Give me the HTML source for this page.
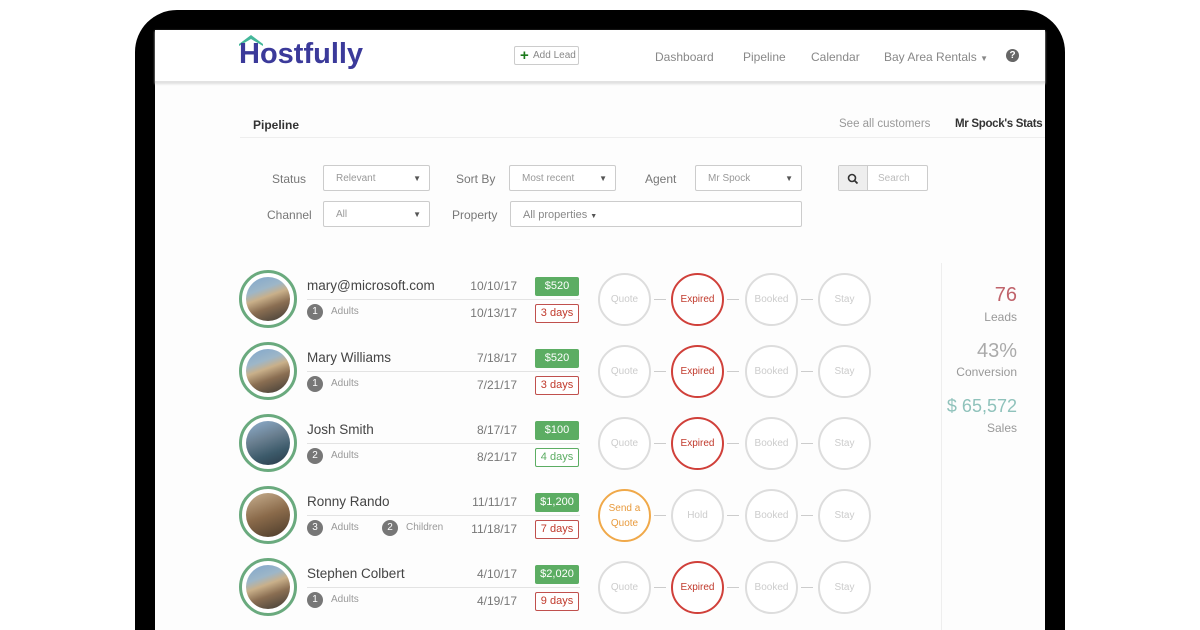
<!DOCTYPE html><html><head><style>
*{margin:0;padding:0;box-sizing:border-box}
html,body{width:1200px;height:630px;overflow:hidden}
body{background:#fff;position:relative;font-family:"Liberation Sans",sans-serif;color:#555}
.a{position:absolute;white-space:nowrap}
.frame{left:135px;top:10px;width:930px;height:640px;background:#000;border-radius:42px 42px 0 0}
.screen{left:155px;top:30px;width:890px;height:600px;background:#fdfdfd}
.hdr{left:155px;top:30px;width:890px;height:53px;background:#fff;border-bottom:2px solid #e2e2e2;box-shadow:0 1px 2px #ddd}
.nav{font-size:12px;color:#888;top:50px}
.lbl{font-size:12px;color:#777}
.sel{height:26px;border:1px solid #ccc;border-radius:2px;font-size:10px;color:#999;padding:7px 12px;background:#fff}
.sel b{position:absolute;right:8px;top:8px;font-size:8px;color:#555;font-weight:normal}
.av{width:58px;height:58px;border-radius:50%;border:3px solid #6aaa7e;background:#fff}
.av i{position:absolute;left:4px;top:4px;width:44px;height:44px;border-radius:50%;background:linear-gradient(160deg,#7fa6cc 0%,#9db6c8 30%,#c9b08a 45%,#8a6e52 65%,#3d3a35 100%)}
.nm{font-size:13.5px;color:#444}
.ln{height:1px;background:#e3e3e3;width:273px}
.num{width:16px;height:16px;border-radius:50%;background:#777;color:#fff;font-size:10px;text-align:center;line-height:16px}
.ad{font-size:10px;color:#999}
.dt{font-size:12px;color:#777;width:80px;text-align:right}
.pr{width:44px;height:19px;background:#5cad63;color:#fff;font-size:11px;text-align:center;line-height:19px;border-radius:2px}
.dy{width:44px;height:19px;border:1px solid #c0504d;color:#c0392b;font-size:11px;text-align:center;line-height:17px;border-radius:2px;background:#fff}
.dy.g{border-color:#5cad63;color:#5cad63}
.c{width:53px;height:53px;border-radius:50%;border:2px solid #ddd;font-size:10px;color:#ccc;text-align:center;display:flex;align-items:center;justify-content:center;background:#fff;line-height:15px;white-space:normal}
.c.r{border-color:#d0403a;color:#c0392b}
.c.o{border-color:#f0a94a;color:#e89a3c}
.cn{width:12px;height:1px;background:#ccc}
</style></head><body>
<div class="a frame"></div>
<div class="a screen"></div>
<div class="a hdr"></div>
<svg class="a" style="left:238px;top:33px" width="26" height="13"><path d="M1 11 L13 2 L25 11 L25 13 L13 6 L1 13Z" fill="#45b79a"/></svg>
<div class="a" style="left:239px;top:38px;font-size:29px;font-weight:bold;color:#3b3a9a;letter-spacing:0px">Hostfully</div>
<div class="a" style="left:514px;top:46px;width:65px;height:19px;border:1px solid #ccc;border-radius:2px;font-size:10px;color:#888;padding:3px 0 0 18px;background:#fff"><span style="position:absolute;left:5px;top:0;color:#1c7a1c;font-size:15px;font-weight:bold">+</span>Add Lead</div>
<div class="a nav" style="left:655px">Dashboard</div>
<div class="a nav" style="left:743px">Pipeline</div>
<div class="a nav" style="left:811px">Calendar</div>
<div class="a nav" style="left:884px">Bay Area Rentals <span style="font-size:8px">▼</span></div>
<div class="a" style="left:1006px;top:49px;width:13px;height:13px;border-radius:50%;background:#666;color:#fff;font-size:10px;font-weight:bold;text-align:center;line-height:13px">?</div>
<div class="a" style="left:253px;top:118px;font-size:12px;color:#333;font-weight:bold">Pipeline</div>
<div class="a" style="left:839px;top:118px;font-size:11.5px;color:#999">See all customers</div>
<div class="a" style="left:955px;top:118px;font-size:11.5px;color:#333;font-weight:bold;letter-spacing:-0.3px">Mr Spock's Stats</div>
<div class="a" style="left:240px;top:137px;width:805px;height:1px;background:#eee"></div>
<div class="a lbl" style="left:272px;top:172px">Status</div>
<div class="a sel" style="left:323px;top:165px;width:107px">Relevant<b>▼</b></div>
<div class="a lbl" style="left:456px;top:172px">Sort By</div>
<div class="a sel" style="left:509px;top:165px;width:107px">Most recent<b>▼</b></div>
<div class="a lbl" style="left:645px;top:172px">Agent</div>
<div class="a sel" style="left:695px;top:165px;width:107px">Mr Spock<b>▼</b></div>
<div class="a" style="left:838px;top:165px;width:90px;height:26px;border:1px solid #ccc;border-radius:2px;background:#fff"><div style="width:29px;height:24px;background:#eee;border-right:1px solid #ccc;text-align:center;padding-top:6px"><svg width="12" height="12"><circle cx="5" cy="5" r="3.5" fill="none" stroke="#333" stroke-width="1.6"/><path d="M7.5 7.5L10.5 10.5" stroke="#333" stroke-width="1.8"/></svg></div><span style="position:absolute;left:39px;top:7px;font-size:10px;color:#bbb">Search</span></div>
<div class="a lbl" style="left:267px;top:208px">Channel</div>
<div class="a sel" style="left:323px;top:201px;width:107px">All<b>▼</b></div>
<div class="a lbl" style="left:452px;top:208px">Property</div>
<div class="a sel" style="left:510px;top:201px;width:292px;font-size:11px;color:#888">All properties <span style="font-size:7px;color:#555">▼</span></div>
<div class="a" style="left:941px;top:263px;width:1px;height:370px;background:#eee"></div>
<div class="a" style="left:940px;top:284px;width:77px;text-align:right;font-size:20px;color:#c0636b">76</div>
<div class="a" style="left:940px;top:310px;width:77px;text-align:right;font-size:12px;color:#999">Leads</div>
<div class="a" style="left:900px;top:340px;width:117px;text-align:right;font-size:20px;color:#aaa">43%</div>
<div class="a" style="left:900px;top:365px;width:117px;text-align:right;font-size:12px;color:#999">Conversion</div>
<div class="a" style="left:900px;top:396px;width:117px;text-align:right;font-size:18px;color:#8fc2bb">$ 65,572</div>
<div class="a" style="left:900px;top:421px;width:117px;text-align:right;font-size:12px;color:#999">Sales</div>

<div class="a" style="left:0;top:0">
<div class="a av" style="left:239px;top:270px"><i></i></div>
<div class="a nm" style="left:307px;top:278px">mary@microsoft.com</div>
<div class="a ln" style="left:307px;top:299px"></div>
<div class="a num" style="left:307px;top:304px">1</div><div class="a ad" style="left:331px;top:306px">Adults</div>
<div class="a dt" style="left:437px;top:279px">10/10/17</div><div class="a dt" style="left:437px;top:306px">10/13/17</div>
<div class="a pr" style="left:535px;top:277px">$520</div><div class="a dy" style="left:535px;top:304px">3 days</div>
<div class="a c" style="left:598px;top:273px">Quote</div><div class="a cn" style="left:654px;top:299px"></div>
<div class="a c r" style="left:671px;top:273px">Expired</div><div class="a cn" style="left:727px;top:299px"></div>
<div class="a c" style="left:745px;top:273px">Booked</div><div class="a cn" style="left:801px;top:299px"></div>
<div class="a c" style="left:818px;top:273px">Stay</div>
</div>
<div class="a" style="left:0;top:72px">
<div class="a av" style="left:239px;top:270px"><i></i></div>
<div class="a nm" style="left:307px;top:278px">Mary Williams</div>
<div class="a ln" style="left:307px;top:299px"></div>
<div class="a num" style="left:307px;top:304px">1</div><div class="a ad" style="left:331px;top:306px">Adults</div>
<div class="a dt" style="left:437px;top:279px">7/18/17</div><div class="a dt" style="left:437px;top:306px">7/21/17</div>
<div class="a pr" style="left:535px;top:277px">$520</div><div class="a dy" style="left:535px;top:304px">3 days</div>
<div class="a c" style="left:598px;top:273px">Quote</div><div class="a cn" style="left:654px;top:299px"></div>
<div class="a c r" style="left:671px;top:273px">Expired</div><div class="a cn" style="left:727px;top:299px"></div>
<div class="a c" style="left:745px;top:273px">Booked</div><div class="a cn" style="left:801px;top:299px"></div>
<div class="a c" style="left:818px;top:273px">Stay</div>
</div>
<div class="a" style="left:0;top:144px">
<div class="a av" style="left:239px;top:270px"><i style="background:linear-gradient(160deg,#8fb0d0,#6a7f90 40%,#3c5a6a 70%,#2a3a48)"></i></div>
<div class="a nm" style="left:307px;top:278px">Josh Smith</div>
<div class="a ln" style="left:307px;top:299px"></div>
<div class="a num" style="left:307px;top:304px">2</div><div class="a ad" style="left:331px;top:306px">Adults</div>
<div class="a dt" style="left:437px;top:279px">8/17/17</div><div class="a dt" style="left:437px;top:306px">8/21/17</div>
<div class="a pr" style="left:535px;top:277px">$100</div><div class="a dy g" style="left:535px;top:304px">4 days</div>
<div class="a c" style="left:598px;top:273px">Quote</div><div class="a cn" style="left:654px;top:299px"></div>
<div class="a c r" style="left:671px;top:273px">Expired</div><div class="a cn" style="left:727px;top:299px"></div>
<div class="a c" style="left:745px;top:273px">Booked</div><div class="a cn" style="left:801px;top:299px"></div>
<div class="a c" style="left:818px;top:273px">Stay</div>
</div>
<div class="a" style="left:0;top:216px">
<div class="a av" style="left:239px;top:270px"><i style="background:linear-gradient(160deg,#c8b090,#8a6a4a 50%,#4a3a2a)"></i></div>
<div class="a nm" style="left:307px;top:278px">Ronny Rando</div>
<div class="a ln" style="left:307px;top:299px"></div>
<div class="a num" style="left:307px;top:304px">3</div><div class="a ad" style="left:331px;top:306px">Adults</div>
<div class="a num" style="left:382px;top:304px">2</div><div class="a ad" style="left:406px;top:306px">Children</div>
<div class="a dt" style="left:437px;top:279px">11/11/17</div><div class="a dt" style="left:437px;top:306px">11/18/17</div>
<div class="a pr" style="left:535px;top:277px">$1,200</div><div class="a dy" style="left:535px;top:304px">7 days</div>
<div class="a c o" style="left:598px;top:273px">Send a<br>Quote</div><div class="a cn" style="left:654px;top:299px"></div>
<div class="a c" style="left:671px;top:273px">Hold</div><div class="a cn" style="left:727px;top:299px"></div>
<div class="a c" style="left:745px;top:273px">Booked</div><div class="a cn" style="left:801px;top:299px"></div>
<div class="a c" style="left:818px;top:273px">Stay</div>
</div>
<div class="a" style="left:0;top:288px">
<div class="a av" style="left:239px;top:270px"><i></i></div>
<div class="a nm" style="left:307px;top:278px">Stephen Colbert</div>
<div class="a ln" style="left:307px;top:299px"></div>
<div class="a num" style="left:307px;top:304px">1</div><div class="a ad" style="left:331px;top:306px">Adults</div>
<div class="a dt" style="left:437px;top:279px">4/10/17</div><div class="a dt" style="left:437px;top:306px">4/19/17</div>
<div class="a pr" style="left:535px;top:277px">$2,020</div><div class="a dy" style="left:535px;top:304px">9 days</div>
<div class="a c" style="left:598px;top:273px">Quote</div><div class="a cn" style="left:654px;top:299px"></div>
<div class="a c r" style="left:671px;top:273px">Expired</div><div class="a cn" style="left:727px;top:299px"></div>
<div class="a c" style="left:745px;top:273px">Booked</div><div class="a cn" style="left:801px;top:299px"></div>
<div class="a c" style="left:818px;top:273px">Stay</div>
</div>
</body></html>
